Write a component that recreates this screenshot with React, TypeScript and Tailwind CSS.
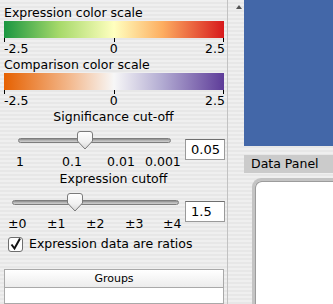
import React from "react";

const STRIPES =
  "bg-[repeating-linear-gradient(to_bottom,#efefef_0px,#efefef_2px,#e7e7e7_2px,#e7e7e7_4px)]";

function ColorScale({ title, gradient }: { title: string; gradient: string }) {
  return (
    <div className="flex flex-col">
      <div className="h-[16px] pl-[4px] leading-[16px]">{title}</div>
      <div className={`ml-[4px] h-[17px] w-[220px] ${gradient}`} />
      <div className="relative ml-[4px] h-[4px] w-[220px]">
        <span className="absolute left-0 top-0 h-[4px] w-px bg-black" />
        <span className="absolute left-[110px] top-0 h-[4px] w-px bg-black" />
        <span className="absolute right-0 top-0 h-[4px] w-px bg-black" />
      </div>
      <div className="ml-[4px] flex h-[13px] w-[221px] justify-between leading-[13px]">
        <span>-2.5</span>
        <span className="pr-[6px]">0</span>
        <span>2.5</span>
      </div>
    </div>
  );
}

function Thumb() {
  return (
    <svg width="16" height="19" viewBox="0 0 16 19" className="absolute top-[-7px]">
      <defs>
        <linearGradient id="tg" x1="0" y1="0" x2="0" y2="1">
          <stop offset="0" stopColor="#ffffff" />
          <stop offset="0.6" stopColor="#f0f0f0" />
          <stop offset="1" stopColor="#d8d8d8" />
        </linearGradient>
      </defs>
      <path
        d="M3 0.5 H13 Q15.5 0.5 15.5 3 V10 L8 18 L0.5 10 V3 Q0.5 0.5 3 0.5 Z"
        fill="url(#tg)"
        stroke="#7a7a7a"
      />
    </svg>
  );
}

function Slider({
  left,
  width,
  thumb,
  value,
}: {
  left: number;
  width: number;
  thumb: number;
  value: string;
}) {
  return (
    <div className="relative flex h-[22px] items-start">
      <div className="relative mt-[6px]" style={{ marginLeft: left, width }}>
        <div className="h-[5px] rounded-full border border-[#7d7d7d] bg-[linear-gradient(to_bottom,#8a8a8a,#b5b5b5,#d0d0d0)]" />
        <div style={{ left: thumb - left - 8 }} className="absolute top-0 h-0 w-[16px]">
          <Thumb />
        </div>
      </div>
      <div
        className="absolute left-[185px] h-[21px] w-[40px] border border-[#9a9a9a] border-t-[#6f6f6f] bg-white pl-[5px] text-[13px] leading-[19px]"
        style={{ top: 7 }}
      >
        {value}
      </div>
    </div>
  );
}

export default function App() {
  return (
    <div
      className={`flex h-[304px] w-[333px] overflow-hidden text-[12.5px] text-black ${STRIPES}`}
      style={{ fontFamily: '"DejaVu Sans", "Lucida Grande", sans-serif' }}
    >
      {/* left control panel */}
      <div className="flex w-[227px] shrink-0 flex-col pt-[5px]">
        <ColorScale
          title="Expression color scale"
          gradient="bg-[linear-gradient(to_right,#1a9641,#a6d96a_25%,#ffffbf_50%,#fdae61_72%,#d7191c)]"
        />
        <div className="h-[2px]" />
        <ColorScale
          title="Comparison color scale"
          gradient="bg-[linear-gradient(to_right,#e66101,#f3b98e_30%,#f7f7f7_50%,#b2abd2_72%,#5e3c99)]"
        />

        <div className="mt-[2px] h-[16px] text-center leading-[16px]">Significance cut-off</div>
        <div className="mt-[7px]">
          <Slider left={18} width={153} thumb={85} value="0.05" />
        </div>
        <div className="relative h-[16px] leading-[16px]">
          <span className="absolute left-[16px]">1</span>
          <span className="absolute left-[62px]">0.1</span>
          <span className="absolute left-[107px]">0.01</span>
          <span className="absolute left-[145px]">0.001</span>
        </div>

        <div className="mt-[1px] h-[16px] text-center leading-[16px]">Expression cutoff</div>
        <div className="mt-[7px]">
          <Slider left={12} width={167} thumb={75} value="1.5" />
        </div>
        <div className="relative h-[16px] leading-[16px]">
          <span className="absolute left-[8px]">±0</span>
          <span className="absolute left-[47px]">±1</span>
          <span className="absolute left-[86px]">±2</span>
          <span className="absolute left-[125px]">±3</span>
          <span className="absolute left-[163px]">±4</span>
        </div>

        <div className="mt-[4px] flex h-[16px] items-center gap-[6px] pl-[8px]">
          <svg width="15" height="15" viewBox="0 0 15 15">
            <rect x="0.5" y="0.5" width="14" height="14" rx="2.5" fill="#fdfdfd" stroke="#6e6e6e" />
            <path d="M3.5 7.5 L6.5 11.5 L12 1.5" fill="none" stroke="#111" strokeWidth="2" />
          </svg>
          <span>Expression data are ratios</span>
        </div>

        <div className="ml-[4px] mt-[17px] flex w-[220px] flex-1 flex-col border border-[#a9a9a9] bg-white">
          <div className="h-[18px] border-b border-[#a9a9a9] bg-[linear-gradient(to_bottom,#ffffff,#ececec)] text-center text-[11px] leading-[17px]">
            Groups
          </div>
        </div>
      </div>

      {/* splitter */}
      <div className="relative w-[17px] shrink-0 border-l border-[#c2c2c2]">
        <svg width="6" height="4" viewBox="0 0 6 4" className="absolute left-[8px] top-[5px]">
          <path d="M0 4 L3 0 L6 4 Z" fill="#555" />
        </svg>
      </div>

      {/* right side */}
      <div className="flex flex-1 flex-col">
        <div className="h-[146px] bg-[#4367a8]" />
        <div className="mt-[9px] h-[18px] bg-[#cbcbcb] pl-[7px] text-[12.5px] leading-[18px]">
          Data Panel
        </div>
        <div className="ml-[8px] mt-[5px] flex-1 rounded-tl-[9px] border-l-[3px] border-t-[3px] border-[#c4c4c4] bg-white shadow-[inset_1px_1px_0_#9c9c9c]" />
      </div>
    </div>
  );
}
